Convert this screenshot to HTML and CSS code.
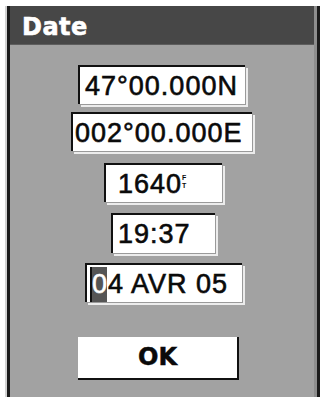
FILE: index.html
```html
<!DOCTYPE html>
<html>
<head>
<meta charset="utf-8">
<link rel="stylesheet" href="styles.css">
</head>
<body>
<div class="screen">
  <div class="panel">
    <div class="title">Date</div>
    <div class="fields">
      <div class="field f1">47°00.000N</div>
      <div class="field f2">002°00.000E</div>
      <div class="field f3">1640<span class="unit"><span>F</span><span>T</span></span></div>
      <div class="field f4">19:37</div>
      <div class="field f5"><span class="cursor">0</span>4 AVR 05</div>
      <div class="ok">OK</div>
    </div>
  </div>
</div>
</body>
</html>
```
FILE: styles.css
```css
html, body {
  margin: 0;
  padding: 0;
  background: #ffffff;
}

.screen {
  margin: 6px 0 0 7px;
  width: 313px;
  height: 391px;
  box-sizing: border-box;
  border-left: 3px solid #1b1b1b;
  border-right: 3px solid #1b1b1b;
  background: #a2a2a2;
  box-shadow: -2px 0 0 #d2d2d2, 0 2px 0 #dcdcdc;
}

.panel {
  height: 100%;
  box-sizing: border-box;
  border-right: 3px solid #8e8e8e;
}

.title {
  height: 39px;
  box-sizing: border-box;
  background: #474747;
  border-bottom: 1px solid #5e5e5e;
  padding: 4px 0 0 12px;
  line-height: 34px;
  color: #ffffff;
  font-family: "DejaVu Sans", sans-serif;
  font-weight: bold;
  font-size: 24px;
  letter-spacing: 0.5px;
  -webkit-text-stroke: 0.6px #ffffff;
}

.fields {
  display: flex;
  flex-direction: column;
  align-items: flex-start;
}

.field {
  box-sizing: border-box;
  height: 39px;
  background: #ffffff;
  border-top: 2px solid #111111;
  border-left: 2px solid #111111;
  box-shadow: 1px 1px 0 #9a9a9a, 3px 3px 0 #ececec;
  font-family: "Liberation Sans", Arial, sans-serif;
  font-size: 27px;
  letter-spacing: 1px;
  line-height: 39px;
  color: #0a0a0a;
  -webkit-text-stroke: 0.6px #0a0a0a;
  white-space: nowrap;
}

.f1 { margin: 20px 0 0 68px; width: 167px; padding-left: 5px; }
.f2 { margin: 8px 0 0 61px; width: 181px; padding-left: 2px; }
.f3 { margin: 12px 0 0 94px; width: 118px; padding-left: 12px; }
.f4 { margin: 11px 0 0 101px; width: 104px; height: 40px; padding-left: 5px; }
.f5 { margin: 10px 0 0 75px; width: 157px; padding-left: 5px; }

.unit {
  display: inline-flex;
  flex-direction: column;
  font-size: 7px;
  line-height: 8px;
  letter-spacing: 0;
  vertical-align: 13px;
  font-weight: bold;
  -webkit-text-stroke: 0;
}

.cursor {
  display: inline-block;
  background: #555555;
  color: #ffffff;
  -webkit-text-stroke: 0.6px #ffffff;
  letter-spacing: 0;
  margin-right: 1px;
  line-height: 35px;
  border-left: 2px solid #111111;
  margin-left: -2px;
}

.ok {
  margin: 35px 0 0 68px;
  width: 161px;
  height: 43px;
  box-sizing: border-box;
  background: #ffffff;
  border-right: 2px solid #111111;
  border-bottom: 2px solid #111111;
  text-align: center;
  font-family: "DejaVu Sans", sans-serif;
  font-weight: bold;
  font-size: 24px;
  line-height: 41px;
  color: #0a0a0a;
  -webkit-text-stroke: 0.5px #0a0a0a;
}
```
